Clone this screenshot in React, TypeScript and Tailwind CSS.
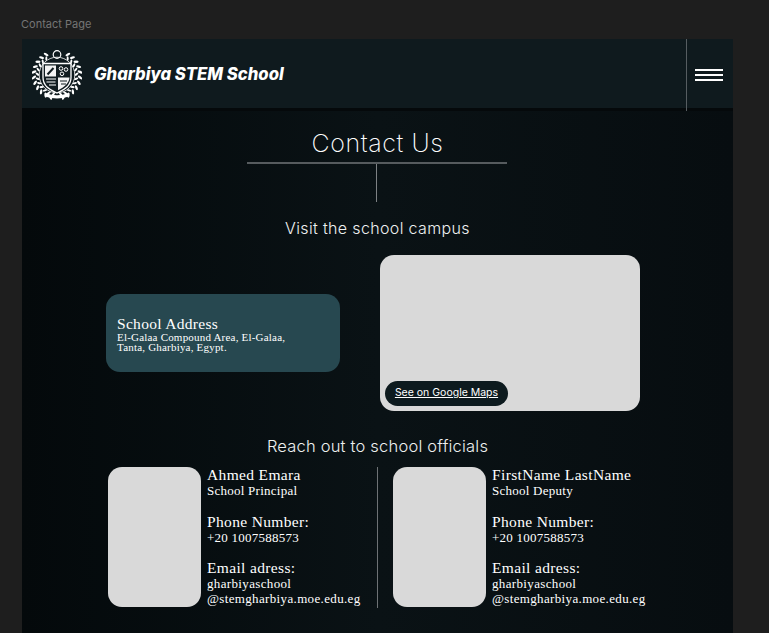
const serif = "font-['Liberation_Serif',serif]";

function Logo() {
  const leaves = [];
  for (let i = 0; i < 11; i++) {
    const a = 28 + i * 13.6;
    leaves.push(
      <ellipse key={"l" + i} cx="25" cy="1.800" rx="1.200" ry="2.600" fill="#fff" transform={`rotate(${a} 25 25) rotate(35 25 1.800)`} />,
      <ellipse key={"r" + i} cx="25" cy="1.800" rx="1.200" ry="2.600" fill="#fff" transform={`rotate(${-a} 25 25) rotate(-35 25 1.800)`} />,
      <ellipse key={"il" + i} cx="25" cy="5.400" rx="1" ry="2.200" fill="#fff" transform={`rotate(${a + 5} 25 25) rotate(-35 25 5.400)`} />,
      <ellipse key={"ir" + i} cx="25" cy="5.400" rx="1" ry="2.200" fill="#fff" transform={`rotate(${-a - 5} 25 25) rotate(35 25 5.400)`} />,
    );
  }
  return (
    <svg viewBox="0 0 50 50" className="h-[50px] w-[50px] shrink-0">
      {leaves}
      <circle cx="25" cy="4.500" r="3.800" fill="#0f1a1e" stroke="#fff" strokeWidth="1.200" />
      <circle cx="25" cy="25" r="17.800" fill="none" stroke="#fff" strokeWidth="0.800" />
      <path d="M11 13.500h28v14c0 8-6 12-14 15.500C17 39.500 11 35.500 11 27.500z" fill="#111c20" stroke="#fff" strokeWidth="1.300" />
      <path d="M13 15.500h11v11H13z" fill="#f4f4f4" />
      <path d="M26 27.500h11.500c-.3 5.500-5 9.500-11.500 12.800z" fill="#f4f4f4" />
      <path d="M15.500 24.500l6-6.500" stroke="#111c20" strokeWidth="2" />
      <circle cx="29" cy="18.500" r="1.800" fill="none" stroke="#fff" strokeWidth="1" />
      <circle cx="34" cy="19.500" r="1.800" fill="none" stroke="#fff" strokeWidth="1" />
      <circle cx="30" cy="23.800" r="1.800" fill="none" stroke="#fff" strokeWidth="1" />
      <path d="M14 29h10M14.500 32h9M17 35h7" stroke="#fff" strokeWidth="1.200" />
      <path d="M28 31h7M29 34h5" stroke="#111c20" strokeWidth="1.200" />
      <path d="M14 43c7 3 15 3 22 0l1 3.500c-8 2.500-16 2.500-24 0z" fill="#fff" />
    </svg>
  );
}

function Official({ name, role }: { name: string; role: string }) {
  return (
    <div className="flex gap-[6px]">
      <div className="h-[140px] w-[93px] shrink-0 rounded-[14px] bg-[#d9d9d9]" />
      <div className={`${serif} text-white`}>
        <p className="mt-[-1px] text-[15.500px] leading-[18px] tracking-[0.35px]">{name}</p>
        <p className="mt-[-1px] text-[13px] leading-[15px] tracking-[0.25px]">{role}</p>
        <p className="mt-[15px] text-[15.500px] leading-[18px] tracking-[0.35px]">Phone Number:</p>
        <p className="mt-[-1px] text-[13px] leading-[16px] tracking-[0.25px]">+20 1007588573</p>
        <p className="mt-[13px] text-[15.500px] leading-[18px] tracking-[0.35px]">Email adress:</p>
        <p className="mt-[-1px] text-[13px] leading-[16px] tracking-[0.35px]">gharbiyaschool</p>
        <p className="text-[13px] leading-[14px] tracking-[0.35px]">@stemgharbiya.moe.edu.eg</p>
      </div>
    </div>
  );
}

export default function App() {
  return (
    <div className="h-[633px] w-[769px] overflow-hidden bg-[#1e1e1e] font-['Inter',sans-serif]">
      <p className="pt-[17px] pl-[21px] text-[11px] leading-[14px] text-[#757575]">Contact Page</p>
      <div className="mt-[8px] ml-[22px] h-[600px] w-[711px] bg-gradient-to-r from-[#04090b] via-[#0a1215] to-[#070d10]">
        <header className="flex h-[69px] items-center justify-between bg-[#0f1a1e]">
          <div className="flex items-center gap-[12px] pt-[3px] pl-[10px]">
            <Logo />
            <span className="text-[16.700px] font-extrabold text-white italic">Gharbiya STEM School</span>
          </div>
          <div className="relative flex h-[69px] w-[47px] items-center justify-center">
            <span className="absolute top-0 left-0 h-[72px] w-px bg-[#565d61]" />
            <div className="mt-[3px] flex w-[29px] flex-col gap-[2.500px] pr-px">
              <span className="h-[2.500px] bg-white" />
              <span className="h-[2.500px] bg-white" />
              <span className="h-[2.500px] bg-white" />
            </div>
          </div>
        </header>
        <div className="h-[3px] bg-[#05090b]" />
        <main className="flex flex-col items-center">
          <h1 className="mt-[15px] text-[25px] leading-[34px] font-extralight tracking-[0.6px] text-white">Contact Us</h1>
          <div className="mt-[2px] mr-[1px] h-[1.500px] w-[260px] bg-[#565b5e]" />
          <div className="mr-[2px] h-[38px] w-px bg-[#7d8184]" />
          <h2 className="mt-[15px] text-[16px] leading-[22px] font-light tracking-[0.35px] text-[#eef0f0]">Visit the school campus</h2>
          <section className="mt-[16px] flex w-[711px] items-center pl-[84px]">
            <div className="flex h-[78px] w-[234px] flex-col justify-center rounded-[14px] bg-[#274850] pt-[2px] pl-[11px] text-white">
              <p className={`${serif} text-[15.500px] leading-[17px] tracking-[0.3px]`}>School Address</p>
              <p className={`${serif} text-[11px] leading-[10.500px] tracking-[0.2px]`}>
                El-Galaa Compound Area, El-Galaa,
                <br />
                Tanta, Gharbiya, Egypt.
              </p>
            </div>
            <div className="ml-[40px] flex h-[156px] w-[260px] items-end rounded-[14px] bg-[#d9d9d9] p-[5px]">
              <a className="flex h-[25px] w-[123px] items-center justify-center rounded-full bg-[#0d1a1e] text-[10.500px] text-white underline">
                See on Google Maps
              </a>
            </div>
          </section>
          <h2 className="mt-[24px] text-[16.500px] leading-[22px] font-light tracking-[0.2px] text-[#eef0f0]">Reach out to school officials</h2>
          <section className="mt-[10px] flex w-[711px] pl-[86px]">
            <div className="w-[269px]">
              <Official name="Ahmed Emara" role="School Principal" />
            </div>
            <div className="h-[141px] w-px bg-[#6e7275]" />
            <div className="pl-[15px]">
              <Official name="FirstName LastName" role="School Deputy" />
            </div>
          </section>
        </main>
      </div>
    </div>
  );
}
